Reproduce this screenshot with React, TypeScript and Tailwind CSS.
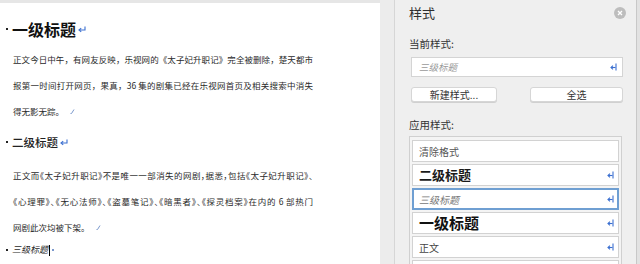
import React from "react";

const font = { fontFamily: '"Noto Sans CJK SC", "Noto Sans", sans-serif' };

function DocReturn() {
    return (
        <svg width="8" height="7" viewBox="0 0 8 7" className="ml-[2px] inline-block">
            <path d="M7 0.5 V4 H1.5" fill="none" stroke="#3b6fd0" strokeWidth="1.1" />
            <path d="M3.2 2.3 L1 4 L3.2 5.7" fill="none" stroke="#3b6fd0" strokeWidth="1.1" />
        </svg>
    );
}

function PanelReturn() {
    return (
        <svg width="7" height="8" viewBox="0 0 7 8" className="shrink-0">
            <path d="M6 0.5 V7.5" stroke="#3b6fd0" strokeWidth="1.1" />
            <path d="M5.5 4.5 H1.2" stroke="#3b6fd0" strokeWidth="1.1" />
            <path d="M3 2.7 L1 4.5 L3 6.3" fill="none" stroke="#3b6fd0" strokeWidth="1.1" />
        </svg>
    );
}

function SoftMark() {
    return (
        <svg width="5" height="5" viewBox="0 0 5 5" className="ml-[6px] inline-block">
            <path d="M4 0.5 L1.5 4.5 M1.5 4.5 H0.5" fill="none" stroke="#7a98cc" strokeWidth="1" />
        </svg>
    );
}

function Bullet() {
    return <span className="mr-[4px] inline-block h-[2px] w-[2px] bg-[#222] align-middle" />;
}

const lineFull = "h-[26px] leading-[26px] w-[300px] whitespace-nowrap text-justify [text-align-last:justify]";
const lineTight =
    "w-[300px] whitespace-nowrap text-justify [text-align-last:justify] [font-feature-settings:'halt']";

function Document() {
    return (
        <div className="flex w-[380px] shrink-0 flex-col border-t-[3px] border-[#e6e6e6] bg-white pl-[6px] text-[#2a2a2a]" style={font}>
            <div className="mt-[13px] flex h-[26px] items-center text-[16px] font-bold leading-[26px] text-[#111]">
                <Bullet />
                <span>一级标题</span>
                <DocReturn />
            </div>
            <div className="mt-[4px] pl-[7px] text-[8.5px]">
                <div className={lineFull}>正文今日中午，有网友反映，乐视网的《太子妃升职记》完全被删除，楚天都市</div>
                <div className={lineFull}>报第一时间打开网页，果真，36 集的剧集已经在乐视网首页及相关搜索中消失</div>
                <div className="flex h-[26px] items-center leading-[26px]">
                    <span>得无影无踪。</span>
                    <SoftMark />
                </div>
            </div>
            <div className="mt-[5px] flex h-[26px] items-center text-[11.5px] font-medium leading-[26px] text-[#222]">
                <Bullet />
                <span>二级标题</span>
                <DocReturn />
            </div>
            <div className="mt-[8px] pl-[7px] text-[8.5px]">
                <div className={"h-[25px] leading-[25px] " + lineTight}>正文而《太子妃升职记》不是唯一一部消失的网剧，据悉，包括《太子妃升职记》、</div>
                <div className={"h-[26px] leading-[26px] " + lineTight}>《心理罪》、《无心法师》、《盗墓笔记》、《暗黑者》、《探灵档案》在内的 6 部热门</div>
                <div className="flex h-[26px] items-center leading-[26px]">
                    <span>网剧此次均被下架。</span>
                    <SoftMark />
                </div>
            </div>
            <div className="mt-[2px] flex h-[16px] items-center text-[9px] italic leading-[16px]">
                <Bullet />
                <span>三级标题</span>
                <span className="ml-[1px] inline-block h-[11px] w-[1px] bg-black" />
                <span className="ml-[2px] inline-block h-[2px] w-[2px] bg-[#7a98cc]" />
            </div>
        </div>
    );
}

const items = [
    { label: "清除格式", cls: "text-[10px] text-[#555]", ret: false },
    { label: "二级标题", cls: "text-[13px] font-bold text-[#1a1a1a]", ret: true },
    { label: "三级标题", cls: "text-[10px] italic text-[#777]", ret: true, selected: true },
    { label: "一级标题", cls: "text-[15px] font-bold text-[#111]", ret: true },
    { label: "正文", cls: "text-[10px] text-[#444]", ret: true },
    { label: "标题", cls: "text-[10px] leading-[10px] text-[#444]", ret: false },
];

function StylePanel() {
    return (
        <div className="flex flex-1 flex-col overflow-hidden bg-[#efefef] pl-[14px] pr-[12px] pt-[5px] text-[#333]" style={font}>
            <div className="flex h-[16px] shrink-0 items-center justify-between">
                <span className="text-[13px] leading-[16px] text-[#2e2e2e]">样式</span>
                <span className="mr-[-2px] flex h-[12px] w-[12px] items-center justify-center rounded-full bg-[#bdbdbd]">
                    <svg width="6" height="6" viewBox="0 0 6 6">
                        <path d="M1 1 L5 5 M5 1 L1 5" stroke="#fff" strokeWidth="1.3" />
                    </svg>
                </span>
            </div>
            <div className="mt-[15px] h-[16px] shrink-0 text-[10.5px] leading-[16px]">当前样式:</div>
            <div className="ml-[2px] mt-[5px] flex h-[20px] w-[212px] shrink-0 items-center justify-between border border-[#d4d4d4] bg-white pl-[7px] pr-[5px]">
                <span className="text-[9.5px] italic text-[#9a9a9a]">三级标题</span>
                <PanelReturn />
            </div>
            <div className="ml-[2px] mt-[10px] flex h-[15px] w-[212px] shrink-0 justify-between">
                <div className="flex w-[86px] items-center justify-center rounded-[3px] border border-[#d6d6d6] bg-white text-[10px] text-[#333] shadow-[0_1px_0_#d0d0d0]">新建样式...</div>
                <div className="flex w-[93px] items-center justify-center rounded-[3px] border border-[#d6d6d6] bg-white text-[10px] text-[#333] shadow-[0_1px_0_#d0d0d0]">全选</div>
            </div>
            <div className="mt-[15px] h-[16px] shrink-0 text-[10.5px] leading-[16px]">应用样式:</div>
            <div className="mt-[3px] flex w-[213px] flex-1 flex-col gap-[2px] border-l border-r border-t border-[#d0d0d0] bg-[#f4f4f4] px-[2px] pt-[3px]">
                {items.map((it) => (
                    <div
                        key={it.label}
                        className={
                            it.selected
                                ? "flex h-[22px] shrink-0 items-center justify-between border-2 border-[#6f9fd2] bg-white pl-[5px] pr-[3px]"
                                : "flex h-[22px] shrink-0 items-center justify-between border border-[#d2d2d2] bg-white pl-[6px] pr-[4px]"
                        }
                    >
                        <span className={it.cls}>{it.label}</span>
                        {it.ret && <PanelReturn />}
                    </div>
                ))}
            </div>
        </div>
    );
}

export default function App() {
    return (
        <div className="flex h-[264px] w-[640px] overflow-hidden bg-white">
            <Document />
            <div className="w-[15px] shrink-0 border-r border-[#d6d6d6] bg-[#ececec]" />
            <StylePanel />
            <div className="w-[4px] shrink-0 border-l border-[#c8c8c8] bg-[#e2e2e2]" />
        </div>
    );
}
